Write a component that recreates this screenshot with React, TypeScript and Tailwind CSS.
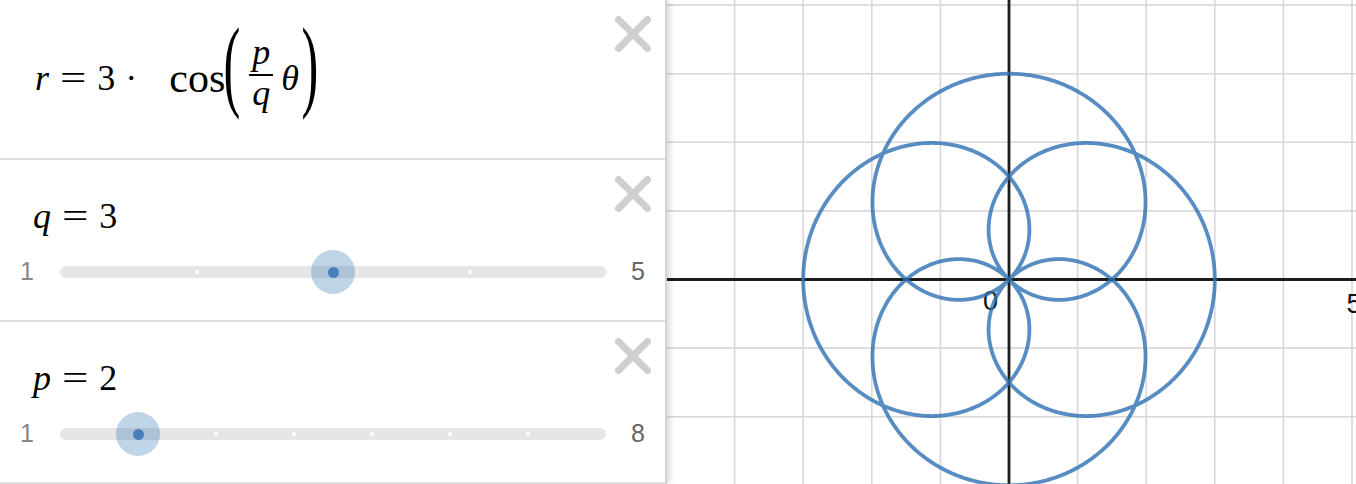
import React from 'react';

const S = 68.6;
const OX = 342;
const OY = 279.5;
const GW = 689;
const GH = 484;

function rosePath() {
  const n = 2400;
  let d = '';
  for (let i = 0; i <= n; i++) {
    const t = (6 * Math.PI * i) / n;
    const r = 3 * Math.cos((2 * t) / 3);
    const x = OX + S * r * Math.cos(t);
    const y = OY - S * r * Math.sin(t);
    d += (i === 0 ? 'M' : 'L') + x.toFixed(2) + ' ' + y.toFixed(2);
  }
  return d + 'Z';
}

function CloseIcon() {
  return (
    <svg width="36" height="36" viewBox="0 0 36 36" className="absolute top-[16px] right-[14px]">
      <path d="M3.5 3.5L32.5 32.5M32.5 3.5L3.5 32.5" stroke="#cfcfcf" strokeWidth="7" strokeLinecap="round" />
    </svg>
  );
}

function Slider({ min, max, value }: { min: number; max: number; value: number }) {
  const w = 546;
  const pos = (v: number) => ((v - min) / (max - min)) * w;
  const ticks: number[] = [];
  for (let v = min + 1; v < max; v++) ticks.push(v);
  return (
    <div className="flex items-center h-[44px] font-['Liberation_Sans',Arial,sans-serif] text-[25px]">
      <div className="w-[60px] pl-[20px] text-[#888]">{min}</div>
      <div className="relative w-[546px] h-[12px] rounded-full bg-[#e6e6e6]">
        {ticks.map((v) => (
          <span
            key={v}
            className="absolute top-[4px] w-[4px] h-[4px] -ml-[2px] rounded-full bg-white"
            style={{ left: pos(v) }}
          />
        ))}
        <span
          className="absolute top-[-16px] w-[44px] h-[44px] -ml-[22px] rounded-full bg-[rgba(45,112,179,0.3)] flex items-center justify-center"
          style={{ left: pos(value) }}
        >
          <span className="w-[11px] h-[11px] rounded-full bg-[#4a7fbe]" />
        </span>
      </div>
      <div className="ml-[25px] text-[#666]">{max}</div>
    </div>
  );
}

function VarRow({ name, value, min, max }: { name: string; value: number; min: number; max: number }) {
  return (
    <div className="relative h-[162px] border-b-2 border-[#dddddd]">
      <CloseIcon />
      <div className="pt-[36px] pl-[33px] h-[76px] flex items-start font-['Liberation_Serif',serif] text-[36px] leading-[40px] text-black">
        <span className="italic">{name}</span>
        <span className="inline-block scale-x-[1.3] mx-[14px]">=</span>
        <span>{value}</span>
      </div>
      <div className="mt-[14px]">
        <Slider min={min} max={max} value={value} />
      </div>
    </div>
  );
}

export default function App() {
  const curve = rosePath();
  const vx: number[] = [];
  for (let k = -4; k <= 5; k++) vx.push(OX + k * S);
  const hy: number[] = [];
  for (let k = -4; k <= 3; k++) hy.push(OY + k * S);

  return (
    <div className="flex w-[1356px] h-[484px] overflow-hidden bg-white">
      <div className="relative z-10 w-[667px] shrink-0 border-r-2 border-[#d4d4d4] bg-white shadow-[3px_0_6px_rgba(0,0,0,0.14)]">
        <div className="relative h-[160px] border-b-2 border-[#dddddd]">
          <CloseIcon />
          <div className="flex items-center h-[156px] pl-[35px] font-['Liberation_Serif',serif] text-[36px] leading-none text-black">
            <span className="italic">r</span>
            <span className="inline-block scale-x-[1.3] mx-[14px]">=</span>
            <span>3</span>
            <span className="ml-[10px]">·</span>
            <span className="ml-[32px] text-[42px]">cos</span>
            <span className="inline-block ml-[1px] scale-x-[1.4] scale-y-[2.85] -translate-y-[14px]">(</span>
            <span className="inline-flex flex-col items-center ml-[11px] italic text-[36px] leading-[30px]">
              <span className="px-[3px] pb-[7px]">p</span>
              <span className="h-[2px] w-full bg-black" />
              <span className="pt-[2px] pb-[11px]">q</span>
            </span>
            <span className="italic ml-[8px]">θ</span>
            <span className="inline-block ml-[5px] scale-x-[1.4] scale-y-[2.85] -translate-y-[14px]">)</span>
          </div>
        </div>
        <VarRow name="q" value={3} min={1} max={5} />
        <VarRow name="p" value={2} min={1} max={8} />
      </div>
      <div className="relative flex-1 h-[484px]">
        <svg width={GW} height={GH} viewBox={`0 0 ${GW} ${GH}`} className="block">
          {vx.map((x) => (
            <line key={'v' + x} x1={x} y1={0} x2={x} y2={GH} stroke="#d8d8d8" strokeWidth="1.6" />
          ))}
          {hy.map((y) => (
            <line key={'h' + y} x1={0} y1={y} x2={GW} y2={y} stroke="#d8d8d8" strokeWidth="1.6" />
          ))}
          <line x1={0} y1={OY} x2={GW} y2={OY} stroke="#1c1c1c" strokeWidth="2.8" />
          <line x1={OX} y1={0} x2={OX} y2={GH} stroke="#1c1c1c" strokeWidth="2.8" />
          <text x={331} y={310} textAnchor="end" fontFamily="Liberation Sans, Arial, sans-serif" fontSize="27" fill="#111">0</text>
          <text x={687} y={313} textAnchor="middle" fontFamily="Liberation Sans, Arial, sans-serif" fontSize="27" fill="#111">5</text>
          <path d={curve} fill="none" stroke="#2d70b3" strokeOpacity="0.8" strokeWidth="3.8" strokeLinejoin="round" />
        </svg>
      </div>
    </div>
  );
}
